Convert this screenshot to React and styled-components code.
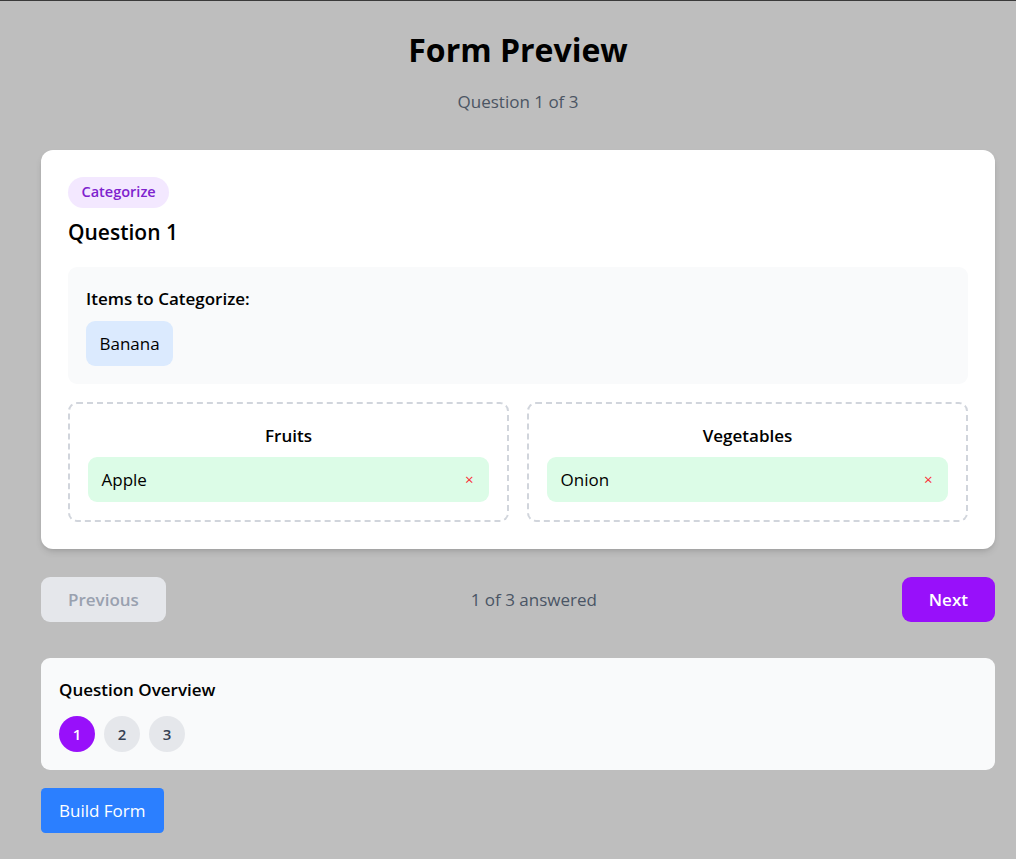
import React from "react";
import styled, { createGlobalStyle } from "styled-components";

const Global = createGlobalStyle`
  html, body { margin: 0; padding: 0; }
  body {
    background: #bebebe;
    border-top: 1px solid #3a3a3a;
    font-family: "Open Sans", "Noto Sans", sans-serif;
    color: #000;
  }
  * { box-sizing: border-box; }
`;

const Page = styled.div`
  padding: 29px 21px 26px 41px;
  display: flex;
  flex-direction: column;
`;

const Header = styled.header`
  text-align: center;
  margin-bottom: 35px;
`;

const Title = styled.h1`
  margin: 0 0 17px;
  font-size: 32px;
  line-height: 40.5px;
  font-weight: 700;
`;

const Subtitle = styled.p`
  margin: 0;
  font-size: 17px;
  line-height: 27px;
  color: #4b5563;
`;

const Card = styled.section`
  background: #fff;
  border-radius: 12px;
  padding: 27px;
  box-shadow: 0 4px 7px -1px rgba(0, 0, 0, 0.12), 0 2px 4px -2px rgba(0, 0, 0, 0.1);
  display: flex;
  flex-direction: column;
`;

const Badge = styled.span`
  align-self: flex-start;
  background: #f3e8ff;
  color: #7e22ce;
  font-size: 14.5px;
  line-height: 22px;
  font-weight: 600;
  padding: 4.5px 13.5px;
  border-radius: 999px;
  margin-bottom: 9px;
`;

const QuestionTitle = styled.h2`
  margin: 0 0 20px;
  font-size: 21px;
  line-height: 30px;
  font-weight: 600;
`;

const ItemsBox = styled.div`
  background: #f9fafb;
  border-radius: 9px;
  padding: 18px;
  margin-bottom: 18px;
`;

const SectionLabel = styled.h3`
  margin: 0 0 9px;
  font-size: 17px;
  line-height: 27px;
  font-weight: 600;
`;

const ChipRow = styled.div`
  display: flex;
  flex-wrap: wrap;
  gap: 9px;
`;

const Chip = styled.div`
  display: flex;
  align-items: center;
  justify-content: space-between;
  height: 45px;
  padding: 0 13.5px;
  border-radius: 9px;
  background: ${(p) => (p.$placed ? "#dcfce7" : "#dbeafe")};
  font-size: 17px;
  line-height: 27px;
`;

const Remove = styled.span`
  color: #fb2c36;
  font-size: 15px;
  line-height: 1;
  padding-right: 2px;
`;

const Categories = styled.div`
  display: grid;
  grid-template-columns: 1fr 1fr;
  gap: 18px;
`;

const Category = styled.div`
  border: 2px dashed #d1d5dc;
  border-radius: 9px;
  padding: 18px;
  display: flex;
  flex-direction: column;
  gap: 8px;
`;

const CategoryTitle = styled.h4`
  margin: 0;
  text-align: center;
  font-size: 17px;
  line-height: 27px;
  font-weight: 600;
`;

const Nav = styled.nav`
  margin-top: 28px;
  display: flex;
  align-items: center;
  justify-content: space-between;
`;

const NavButton = styled.button`
  border: none;
  font-family: inherit;
  font-size: 17px;
  line-height: 27px;
  font-weight: 600;
  padding: 9px 27px;
  border-radius: 9px;
  background: ${(p) => (p.$primary ? "#9810fa" : "#e5e7eb")};
  color: ${(p) => (p.$primary ? "#fff" : "#99a1af")};
  cursor: pointer;
`;

const Progress = styled.span`
  font-size: 17px;
  line-height: 27px;
  color: #4a5565;
`;

const Overview = styled.section`
  margin-top: 36px;
  background: #f9fafb;
  border-radius: 9px;
  padding: 18px;
`;

const OverviewTitle = styled.h3`
  margin: 0 0 13px;
  font-size: 17px;
  line-height: 27px;
  font-weight: 600;
`;

const Dots = styled.div`
  display: flex;
  gap: 9px;
`;

const Dot = styled.button`
  width: 36px;
  height: 36px;
  border-radius: 50%;
  border: none;
  padding: 0;
  font-family: inherit;
  font-size: 15px;
  font-weight: 600;
  background: ${(p) => (p.$active ? "#9810fa" : "#e5e7eb")};
  color: ${(p) => (p.$active ? "#fff" : "#364153")};
`;

const BuildButton = styled.button`
  margin-top: 18px;
  align-self: flex-start;
  border: none;
  font-family: inherit;
  font-size: 17px;
  line-height: 27px;
  padding: 9px 18px;
  border-radius: 4.5px;
  background: #2b7fff;
  color: #fff;
`;

const categories = [
  { name: "Fruits", items: ["Apple"] },
  { name: "Vegetables", items: ["Onion"] },
];

export default function App() {
  return (
    <>
      <Global />
      <Page>
        <Header>
          <Title>Form Preview</Title>
          <Subtitle>Question 1 of 3</Subtitle>
        </Header>
        <Card>
          <Badge>Categorize</Badge>
          <QuestionTitle>Question 1</QuestionTitle>
          <ItemsBox>
            <SectionLabel>Items to Categorize:</SectionLabel>
            <ChipRow>
              <Chip>Banana</Chip>
            </ChipRow>
          </ItemsBox>
          <Categories>
            {categories.map((c) => (
              <Category key={c.name}>
                <CategoryTitle>{c.name}</CategoryTitle>
                {c.items.map((i) => (
                  <Chip key={i} $placed>
                    <span>{i}</span>
                    <Remove>×</Remove>
                  </Chip>
                ))}
              </Category>
            ))}
          </Categories>
        </Card>
        <Nav>
          <NavButton>Previous</NavButton>
          <Progress>1 of 3 answered</Progress>
          <NavButton $primary>Next</NavButton>
        </Nav>
        <Overview>
          <OverviewTitle>Question Overview</OverviewTitle>
          <Dots>
            <Dot $active>1</Dot>
            <Dot>2</Dot>
            <Dot>3</Dot>
          </Dots>
        </Overview>
        <BuildButton>Build Form</BuildButton>
      </Page>
    </>
  );
}
